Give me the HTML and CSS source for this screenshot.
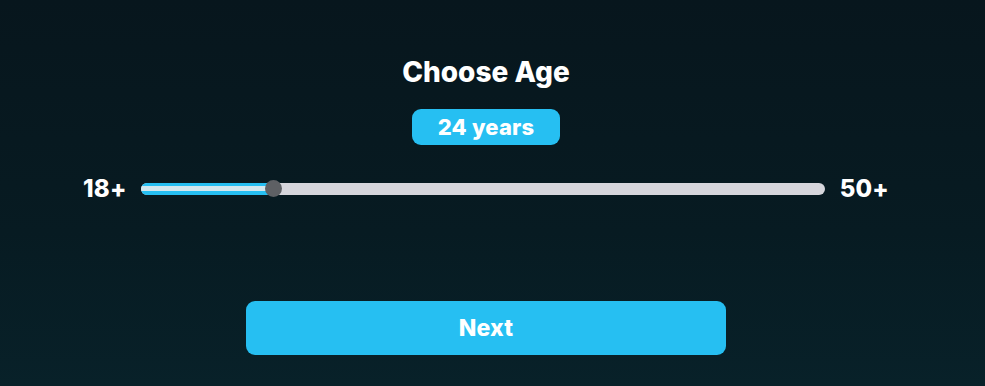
FILE: index.html
```html
<!DOCTYPE html>
<html lang="en">
<head>
    <meta charset="UTF-8">
    <meta name="viewport" content="width=device-width, initial-scale=1.0">
    <title>Choose Age</title>
    <link rel="stylesheet" href="styles.css">
</head>
<body>
    <div class="age-step">
        <h1 class="title">Choose Age</h1>
        <div class="badge">24 years</div>

        <div class="slider-row">
            <span class="limit">18+</span>
            <div class="track">
                <div class="fill" style="width: 132px"></div>
                <div class="thumb" style="left: 132px"></div>
            </div>
            <span class="limit">50+</span>
        </div>

        <button class="next-btn">Next</button>
    </div>
</body>
</html>
```

FILE: styles.css
```css
:root {
    --accent: #26bff2;
    --track: #d6d6dc;
    --thumb: #5e6064;
    --text: #ffffff;
}

html, body {
    height: 100%;
}

body {
    margin: 0;
    font-family: 'Inter', 'Open Sans', sans-serif;
    background: linear-gradient(to bottom, #07161d 0%, #071b22 60%, #082129 100%);
    color: var(--text);
}

.age-step {
    width: 972px;
    display: flex;
    flex-direction: column;
    align-items: center;
    padding-top: 54px;
}

.title {
    margin: 0;
    font-size: 28px;
    font-weight: 800;
    line-height: 36px;
    letter-spacing: 0;
}

.badge {
    margin-top: 19px;
    width: 148px;
    height: 36px;
    border-radius: 9px;
    background: var(--accent);
    font-size: 22px;
    font-weight: 800;
    line-height: 36px;
    text-align: center;
    letter-spacing: 0.2px;
}

.slider-row {
    margin-top: 29px;
    display: flex;
    align-items: center;
    width: 806px;
    justify-content: space-between;
}

.limit {
    font-size: 24px;
    font-weight: 800;
    line-height: 30px;
    letter-spacing: 0.2px;
}

.track {
    position: relative;
    width: 684px;
    height: 12px;
    border-radius: 6px;
    background: var(--track);
}

.fill {
    height: 12px;
    border-radius: 6px 0 0 6px;
    background: linear-gradient(to bottom, var(--accent) 0 3px, #d3e7ee 3px 8px, var(--accent) 8px 12px);
}

.thumb {
    position: absolute;
    top: -3px;
    width: 17px;
    height: 17px;
    margin-left: -8px;
    border-radius: 50%;
    background: var(--thumb);
}

.next-btn {
    margin-top: 97px;
    width: 480px;
    height: 54px;
    border: none;
    border-radius: 9px;
    background: var(--accent);
    color: var(--text);
    font-family: inherit;
    font-size: 23px;
    font-weight: 800;
    letter-spacing: 0.2px;
    cursor: pointer;
}
```
